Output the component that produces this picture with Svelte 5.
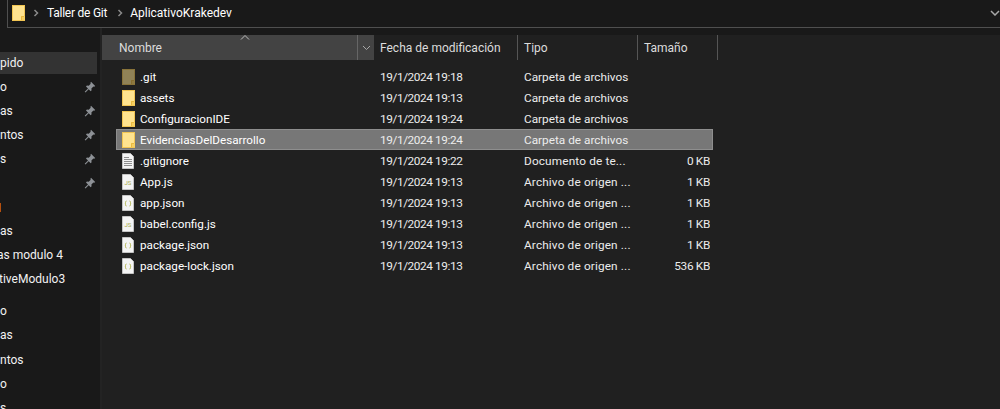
<script>
  const side = [
    { t: 'pido', h: 1 }, { t: 'o', pin: 1 }, { t: 'as', pin: 1 }, { t: 'ntos', pin: 1 },
    { t: 's', pin: 1 }, { t: '', pin: 1 }, { t: '', o: 1 }, { t: 'as' },
    { t: 'as modulo 4', x: -3 }, { t: 'tiveModulo3', x: -1 }, { t: '', gap: 1 }, { t: 'o' },
    { t: 'as' }, { t: 'ntos' }, { t: 'o' }, { t: 's' }
  ];
  const folder = 'Carpeta de archivos', org = 'Archivo de origen ...';
  const files = [
    { n: '.git', d: '19:18', k: folder, i: 'hidden' },
    { n: 'assets', d: '19:13', k: folder, i: 'folder' },
    { n: 'ConfiguracionIDE', d: '19:24', k: folder, i: 'folder' },
    { n: 'EvidenciasDelDesarrollo', d: '19:24', k: folder, i: 'folder', sel: true },
    { n: '.gitignore', d: '19:22', k: 'Documento de te...', s: '0 KB', i: 'text' },
    { n: 'App.js', d: '19:13', k: org, s: '1 KB', i: 'js' },
    { n: 'app.json', d: '19:13', k: org, s: '1 KB', i: 'json' },
    { n: 'babel.config.js', d: '19:13', k: org, s: '1 KB', i: 'js' },
    { n: 'package.json', d: '19:13', k: org, s: '1 KB', i: 'json' },
    { n: 'package-lock.json', d: '19:13', k: org, s: '536 KB', i: 'json' }
  ];
</script>

{#snippet folderIcon(dim)}
  <svg class="ico" class:dim width="16" height="16" viewBox="0 0 16 16">
    <rect x="2.500" y=".5" width="12" height="15" fill="#ffe38f" stroke="#f2c552" />
    <path d="M11 15v-4h4v4z" fill="#f7cf60" />
    <path d="M11.500 15v-3.500H14" fill="none" stroke="#e9b93f" />
  </svg>
{/snippet}

{#snippet docIcon(kind)}
  <svg class="ico" width="16" height="16" viewBox="0 0 16 16">
    <path d="M2.500 .5h8l3 3v12h-11z" fill="#f4f4f4" stroke="#c4c4c4" />
    {#if kind === 'text'}
      <path d="M4 4.500h5M4 6.500h8M4 8.500h8M4 10.500h8M4 12.500h8" stroke="#8f8f8f" fill="none" />
    {:else if kind === 'js'}
      <text x="8" y="11" class="js">JS</text>
    {:else}
      <path d="M6.500 6q-1 0-1 1.500v.5q0 .5-.5.5.5 0 .5.5v.5q0 1.500 1 1.500M9.500 6q1 0 1 1.500v.5q0 .5.500.5-.5 0-.5.5v.5q0 1.500-1 1.500" fill="none" stroke="#b3b653" />
    {/if}
  </svg>
{/snippet}

<div class="win">
  <header class="top">
    <div class="crumbs">
      {@render folderIcon(false)}
      <svg class="chev first" width="8" height="8" viewBox="0 0 8 8"><path d="M2.500 1l3 3-3 3" fill="none" stroke="#8a8a8a" stroke-width="1.500" /></svg>
      <span class="tight">Taller de Git</span>
      <svg class="chev second" width="8" height="8" viewBox="0 0 8 8"><path d="M2.500 1l3 3-3 3" fill="none" stroke="#8a8a8a" stroke-width="1.500" /></svg>
      <span>AplicativoKrakedev</span>
      <svg class="more" width="10" height="6" viewBox="0 0 10 6"><path d="M1 1l4 4 4-4" fill="none" stroke="#a8a8a8" stroke-width="1.500" /></svg>
    </div>
  </header>
  <div class="body">
    <nav class="side">
      {#each side as s}
        <div class="item" class:hi={s.h} class:gap={s.gap}>
          {#if s.o}<i class="orange"></i>{/if}
          <span style:margin-left={s.x ? `${s.x}px` : null}>{s.t}</span>
          {#if s.pin}
            <svg class="pin" width="12" height="12" viewBox="0 0 12 12"><path d="M7 .8l4.200 4.200-1 .8-.8-.3-2 2 .2 1.800-.9.9-2-2-3.200 3.300-.8-.8 3.300-3.200-2-2 .9-.9 1.800.2 2-2-.3-.8z" fill="#8d9196" /></svg>
          {/if}
        </div>
      {/each}
    </nav>
    <main class="list">
      <div class="head">
        <div class="col c1">
          <span>Nombre</span>
          <svg class="sort" width="10" height="5" viewBox="0 0 10 5"><path d="M1 4.500l4-4 4 4" fill="none" stroke="#bdbdbd" /></svg>
          <div class="drop"><svg width="9" height="6" viewBox="0 0 9 6"><path d="M1 1l3.500 3.500L8 1" fill="none" stroke="#a8a8a8" /></svg></div>
        </div>
        <div class="col c2">Fecha de modificación</div>
        <div class="col c3">Tipo</div>
        <div class="col c4">Tamaño</div>
      </div>
      <div class="rows">
        {#each files as f}
          <div class="row" class:sel={f.sel}>
            <div class="cell n">
              {#if f.i === 'folder'}{@render folderIcon(false)}
              {:else if f.i === 'hidden'}{@render folderIcon(true)}
              {:else}{@render docIcon(f.i)}{/if}
              <span>{f.n}</span>
            </div>
            <div class="cell d">19/1/2024 {f.d}</div>
            <div class="cell k" class:wide={f.k !== folder}>{f.k}</div>
            <div class="cell s">{f.s ?? ''}</div>
          </div>
        {/each}
      </div>
    </main>
  </div>
</div>

<style>
  :global(body) { margin: 0; background: #191919; }
  .win { width: 1000px; height: 409px; overflow: hidden; background: #191919; color: #fff; font: 12px Roboto, sans-serif; }
  .top { height: 28px; box-sizing: border-box; padding-left: 7px; }
  .crumbs { height: 28px; box-sizing: border-box; border: 1px solid #4f4f4f; border-top: 0; border-right: 0; display: flex; align-items: center; padding: 0 0 2px 2px; }
  .chev.first { margin: 0 7.500px 0 5.500px; }
  .chev.second { margin: 0 6.500px 0 8.500px; }
  .tight { letter-spacing: -.25px; }
  .more { margin-left: auto; flex: none; }
  .body { display: flex; height: 381px; }
  .side { width: 102px; flex: none; padding-top: 23px; box-sizing: border-box; border-right: 2px solid #232323; overflow: hidden; }
  .item { height: 24.050px; display: flex; align-items: center; position: relative; width: 97px; color: #f2f2f2; white-space: nowrap; overflow: hidden; }
  .item.hi { background: #333; height: 22px; margin: 1px 0; }
  .item.gap { height: 8px; }
  .pin { position: absolute; right: 1px; top: 6px; }
  .orange { width: 1px; height: 9px; background: #b5500f; }
  .list { flex: 1; min-width: 0; background: #202020; margin-top: 7px; }
  .head { display: flex; height: 25px; color: #dcdcdc; }
  .col { box-sizing: border-box; display: flex; align-items: center; padding-left: 6px; border-right: 1px solid #555; position: relative; }
  .c1 { width: 272px; background: #434343; padding-left: 17px; border-right: 0; }
  .c2 { width: 144px; }
  .c3 { width: 120px; }
  .c4 { width: 80px; }
  .sort { position: absolute; left: 138px; top: 0; }
  .drop { position: absolute; right: 0; top: 0; bottom: 0; width: 16px; border-left: 1px solid #666; display: flex; align-items: center; justify-content: center; }
  .rows { padding: 6px 0 0 14px; }
  .row { display: flex; height: 21px; width: 597px; box-sizing: border-box; align-items: center; color: #ececec; font-size: 11.800px; }
  .row.sel { background: #777; box-shadow: inset 0 0 0 1px #8e8e8e; }
  .cell { box-sizing: border-box; white-space: nowrap; overflow: hidden; }
  .n { width: 264px; padding-left: 4px; display: flex; align-items: center; gap: 4px; color: #fff; font-size: 11.700px; }
  .d { width: 144px; letter-spacing: -.4px; }
  .k { width: 118px; }
  .k.wide { letter-spacing: .15px; }
  .s { width: 68px; text-align: right; letter-spacing: -.3px; }
  .ico { flex: none; }
  .ico.dim { opacity: .5; }
  .js { font: 6px Roboto, sans-serif; fill: #a8ab4a; text-anchor: middle; }
</style>
